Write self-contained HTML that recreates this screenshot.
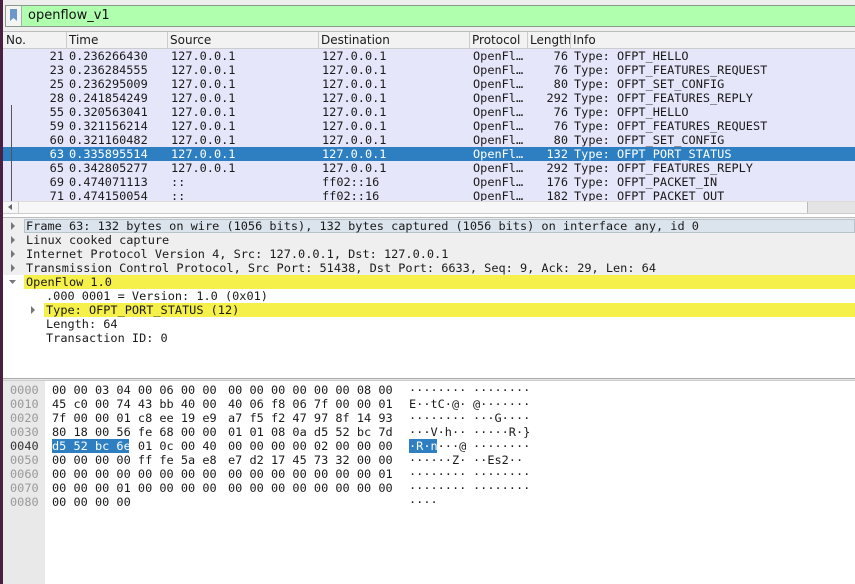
<!DOCTYPE html>
<html><head><meta charset="utf-8"><style>
*{margin:0;padding:0;box-sizing:border-box}
body{width:855px;height:584px;overflow:hidden;background:#fff;position:relative;font-family:"DejaVu Sans Mono","Liberation Mono",monospace;font-size:11.9px;color:#1a1a1a}
.a{position:absolute;white-space:pre}
.ui{font-family:"DejaVu Sans","Liberation Sans",sans-serif;font-size:12px}
.r{height:14px;line-height:15px}
</style></head><body>
<div class="a" style="left:0;top:0;width:855px;height:31px;background:#efefef"></div>
<div class="a" style="left:0;top:0;width:3px;height:584px;background:#4a2042;z-index:9"></div>
<div class="a" style="left:5px;top:5px;width:850px;height:22px;background:#afffaf;border:1px solid #8a9a8a;border-right:none"></div>
<div class="a" style="left:6px;top:6px;width:16px;height:20px;background:#f4f4f4;border-right:1px solid #aaa"></div>
<div class="a" style="left:10px;top:9px;width:7px;height:12px;background:#6e97c9;clip-path:polygon(0 0,100% 0,100% 100%,50% 75%,0 100%)"></div>
<div class="a ui" style="left:28px;top:8px;font-size:13px;color:#111">openflow_v1</div>
<div class="a" style="left:3px;top:31px;width:852px;height:18px;background:#f2f2f2;border-top:1px solid #bbb;border-bottom:1px solid #ccc"></div>
<div class="a ui" style="left:6px;top:33px">No.</div>
<div class="a ui" style="left:69px;top:33px">Time</div>
<div class="a ui" style="left:170px;top:33px">Source</div>
<div class="a ui" style="left:321px;top:33px">Destination</div>
<div class="a ui" style="left:472px;top:33px">Protocol</div>
<div class="a ui" style="left:530px;top:33px;width:40px;overflow:hidden">Length</div>
<div class="a ui" style="left:573px;top:33px">Info</div>
<div class="a" style="left:66px;top:32px;width:1px;height:16px;background:#ccc"></div>
<div class="a" style="left:167px;top:32px;width:1px;height:16px;background:#ccc"></div>
<div class="a" style="left:318px;top:32px;width:1px;height:16px;background:#ccc"></div>
<div class="a" style="left:469px;top:32px;width:1px;height:16px;background:#ccc"></div>
<div class="a" style="left:527px;top:32px;width:1px;height:16px;background:#ccc"></div>
<div class="a" style="left:570px;top:32px;width:1px;height:16px;background:#ccc"></div>
<div class="a" style="left:3px;top:49px;width:852px;height:152px;background:#e6e6fa;overflow:hidden" id="pl">
</div>
<div class="a" style="left:11px;top:105px;width:1px;height:96px;background:#555;z-index:3"></div>
<script>
var rows=[["21","0.236266430","127.0.0.1","127.0.0.1","76","OFPT_HELLO"],["23","0.236284555","127.0.0.1","127.0.0.1","76","OFPT_FEATURES_REQUEST"],["25","0.236295009","127.0.0.1","127.0.0.1","80","OFPT_SET_CONFIG"],["28","0.241854249","127.0.0.1","127.0.0.1","292","OFPT_FEATURES_REPLY"],["55","0.320563041","127.0.0.1","127.0.0.1","76","OFPT_HELLO"],["59","0.321156214","127.0.0.1","127.0.0.1","76","OFPT_FEATURES_REQUEST"],["60","0.321160482","127.0.0.1","127.0.0.1","80","OFPT_SET_CONFIG"],["63","0.335895514","127.0.0.1","127.0.0.1","132","OFPT_PORT_STATUS"],["65","0.342805277","127.0.0.1","127.0.0.1","292","OFPT_FEATURES_REPLY"],["69","0.474071113","::","ff02::16","176","OFPT_PACKET_IN"],["71","0.474150054","::","ff02::16","182","OFPT_PACKET_OUT"]];
var h="";
rows.forEach(function(r,i){var t=i*14,s=i==7;var c=s?"color:#fff;":"";
if(s)h+='<div class="a" style="left:0;top:'+t+'px;width:852px;height:14px;background:#2d7fc1"></div>';
h+='<div class="a r" style="'+c+'left:30px;top:'+t+'px;width:31px;text-align:right">'+r[0]+'</div>';
h+='<div class="a r" style="'+c+'left:66px;top:'+t+'px">'+r[1]+'</div>';
h+='<div class="a r" style="'+c+'left:168px;top:'+t+'px">'+r[2]+'</div>';
h+='<div class="a r" style="'+c+'left:319px;top:'+t+'px">'+r[3]+'</div>';
h+='<div class="a r" style="'+c+'left:470px;top:'+t+'px">OpenFl…</div>';
h+='<div class="a r" style="'+c+'left:520px;top:'+t+'px;width:45px;text-align:right">'+r[4]+'</div>';
h+='<div class="a r" style="'+c+'left:571px;top:'+t+'px">Type: '+r[5]+'</div>';});
document.getElementById("pl").innerHTML=h;
</script>
<div class="a" style="left:3px;top:201px;width:852px;height:13px;background:#f7f7f7;border-top:1px solid #ddd;border-bottom:1px solid #ccc"></div>
<div class="a" style="left:18px;top:201px;width:1px;height:13px;background:#ccc"></div>
<div class="a" style="left:8px;top:204px;width:0;height:0;border:3px solid transparent;border-right:4px solid #666;border-left:none"></div>
<div class="a" style="left:807px;top:202px;width:48px;height:11px;background:#e4e4e4;border-left:1px solid #bbb"></div>
<div class="a" style="left:3px;top:217px;width:852px;height:1px;background:#bbb"></div>
<div class="a" style="left:3px;top:218px;width:852px;height:57px;background:#efefef"></div>
<div class="a" style="left:24px;top:219px;width:831px;height:14px;background:#dbe4ec;border:1px solid #b8c4cc"></div>
<div class="a" style="left:24px;top:275px;width:831px;height:14px;background:#f5f04a"></div>
<div class="a" style="left:44px;top:303px;width:811px;height:14px;background:#f5f04a"></div>
<div class="a r" style="left:26px;top:219px">Frame 63: 132 bytes on wire (1056 bits), 132 bytes captured (1056 bits) on interface any, id 0</div>
<div class="a r" style="left:26px;top:233px">Linux cooked capture</div>
<div class="a r" style="left:26px;top:247px">Internet Protocol Version 4, Src: 127.0.0.1, Dst: 127.0.0.1</div>
<div class="a r" style="left:26px;top:261px">Transmission Control Protocol, Src Port: 51438, Dst Port: 6633, Seq: 9, Ack: 29, Len: 64</div>
<div class="a r" style="left:26px;top:275px">OpenFlow 1.0</div>
<div class="a r" style="left:46px;top:289px">.000 0001 = Version: 1.0 (0x01)</div>
<div class="a r" style="left:46px;top:303px">Type: OFPT_PORT_STATUS (12)</div>
<div class="a r" style="left:46px;top:317px">Length: 64</div>
<div class="a r" style="left:46px;top:331px">Transaction ID: 0</div>
<svg class="a" style="left:0;top:219px" width="45" height="100">
<path d="M11 3l4 4-4 4z M11 17l4 4-4 4z M11 31l4 4-4 4z M11 45l4 4-4 4z M31 87l4 4-4 4z" fill="#777"/>
<path d="M9 61l7 0-3.5 4z" fill="#777"/>
</svg>
<div class="a" style="left:3px;top:378px;width:852px;height:3px;background:#e8e8e8;border-top:1px solid #aaa;border-bottom:1px solid #ccc"></div>
<div class="a" style="left:3px;top:381px;width:42px;height:203px;background:#e9e9e9"></div>
<div class="a" style="left:52px;top:439px;width:77px;height:14px;background:#2d7fc1"></div>
<div class="a" style="left:409px;top:439px;width:28px;height:14px;background:#2d7fc1"></div>
<div id="hx"></div>
<script>
var d=[["0000","00 00 03 04 00 06 00 00","00 00 00 00 00 00 08 00","········","········"],
["0010","45 c0 00 74 43 bb 40 00","40 06 f8 06 7f 00 00 01","E··tC·@·","@·······"],
["0020","7f 00 00 01 c8 ee 19 e9","a7 f5 f2 47 97 8f 14 93","········","···G····"],
["0030","80 18 00 56 fe 68 00 00","01 01 08 0a d5 52 bc 7d","···V·h··","·····R·}"],
["0040","d5 52 bc 6e 01 0c 00 40","00 00 00 00 02 00 00 00","·R·n···@","········"],
["0050","00 00 00 00 ff fe 5a e8","e7 d2 17 45 73 32 00 00","······Z·","··Es2··"],
["0060","00 00 00 00 00 00 00 00","00 00 00 00 00 00 00 01","········","········"],
["0070","00 00 00 01 00 00 00 00","00 00 00 00 00 00 00 00","········","········"],
["0080","00 00 00 00","","····",""]];
var h="";
d.forEach(function(r,i){var t=383+i*14;var hl=i==4;
h+='<div class="a r" style="left:10px;top:'+t+'px;color:'+(hl?'#333':'#999')+'">'+r[0]+'</div>';
if(hl){h+='<div class="a r" style="left:52px;top:'+t+'px"><span style="color:#fff">d5 52 bc 6e</span> 01 0c 00 40</div>';
h+='<div class="a r" style="left:409px;top:'+t+'px;color:#fff">·R·n<span style="color:#1a1a1a">···@</span></div>';}
else{h+='<div class="a r" style="left:52px;top:'+t+'px">'+r[1]+'</div>';
h+='<div class="a r" style="left:409px;top:'+t+'px">'+r[3]+'</div>';}
h+='<div class="a r" style="left:228px;top:'+t+'px">'+r[2]+'</div>';
h+='<div class="a r" style="left:473px;top:'+t+'px">'+r[4]+'</div>';});
document.getElementById("hx").innerHTML=h;
</script>
</body></html>
